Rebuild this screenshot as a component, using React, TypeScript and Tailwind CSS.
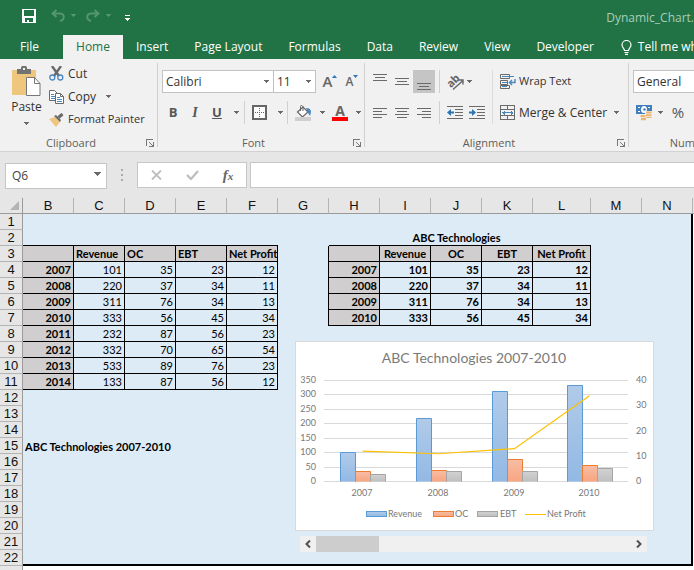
import type { ReactNode } from "react";

const UI = "font-['Open_Sans','Noto_Sans',sans-serif]";
const CALC = "font-['Lato','Open_Sans',sans-serif]";

function Caret() {
  return (
    <svg width="7" height="4" viewBox="0 0 7 4" className="text-[#6a6a6a]" shapeRendering="crispEdges" aria-hidden="true">
      <path d="M0 0h7v1H6v1H5v1H4v1H3V3H2V2H1V1H0z" fill="currentColor" />
    </svg>
  );
}

function SmallCaret({ className = "text-[#6a6a6a]" }: { className?: string }) {
  return (
    <svg width="5" height="3" viewBox="0 0 5 3" className={className} shapeRendering="crispEdges" aria-hidden="true">
      <path d="M0 0h5v1H4v1H3v1H2V2H1V1H0z" fill="currentColor" />
    </svg>
  );
}

function Launcher() {
  return (
    <button aria-label="More options" className="absolute right-1 bottom-1">
      <svg width="8" height="8" viewBox="0 0 8 8" shapeRendering="crispEdges">
        <path d="M.5 7V.5H7" fill="none" stroke="#777" />
        <path d="M3 3h1v1h1v1h1v1h1V3h1v5H3V7h3V6H5V5H4V4H3z" fill="#777" />
      </svg>
    </button>
  );
}

function Group({ label, className, launcher = true, children }: { label: string; className: string; launcher?: boolean; children: ReactNode }) {
  return (
    <section aria-label={label} className={`relative flex h-[92px] shrink-0 flex-col ${className}`}>
      <div className="h-[75px]">{children}</div>
      <div className={`text-center text-[11px] leading-[17px] text-[#605e5c] ${launcher ? "pr-4" : ""}`}>{label}</div>
      {launcher && <Launcher />}
      <span className="absolute top-1 right-0 h-[84px] w-px bg-[#d0d0d0]" />
    </section>
  );
}

function Divider() {
  return <span className="h-[23px] w-px shrink-0 bg-[#d0d0d0]" />;
}

function Tool({ label, className = "w-[22px]", children }: { label: string; className?: string; children: ReactNode }) {
  return (
    <button aria-label={label} className={`flex h-[23px] shrink-0 items-center justify-center ${className}`}>
      {children}
    </button>
  );
}

function Picker({ label, options, className }: { label: string; options: string[]; className: string }) {
  return (
    <div className={`relative h-[23px] shrink-0 ${className}`}>
      <select aria-label={label} className="block h-full w-full appearance-none border border-[#c2c2c2] bg-white pl-[3px] text-[12px] leading-[20px] text-[#333] outline-none">
        {options.map((o) => (
          <option key={o}>{o}</option>
        ))}
      </select>
      <span className="pointer-events-none absolute top-[10px] right-[5px]">
        <SmallCaret />
      </span>
    </div>
  );
}

function Lines({ rows }: { rows: [number, number, number][] }) {
  return (
    <svg width="14" height="16" viewBox="0 0 14 16" shapeRendering="crispEdges" aria-hidden="true">
      {rows.map(([y, a, b]) => (
        <path key={y} d={`M${a} ${y + 0.5}H${b}`} stroke="#6a6a6a" />
      ))}
    </svg>
  );
}

function Indent({ dir }: { dir: "in" | "out" }) {
  return (
    <svg width="16" height="13" viewBox="0 0 16 13" aria-hidden="true">
      <g stroke="#6a6a6a" shapeRendering="crispEdges">
        <path d="M0 .5h16M8 3.500h8M8 6.500h8M8 9.500h8M0 12.500h16" />
      </g>
      {dir === "out" ? (
        <path d="M0 6.500L4 3v2.500h3v2H4V10z" fill="#2e75b6" />
      ) : (
        <path d="M7 6.500L3 3v2.500H0v2h3V10z" fill="#2e75b6" />
      )}
    </svg>
  );
}

function TitleBar() {
  return (
    <header className="flex h-[35px] items-center bg-[#217346] pl-[22px]">
      <button aria-label="Save" className="-mt-1">
        <svg width="14" height="14" viewBox="0 0 14 14" shapeRendering="crispEdges">
          <path d="M0 0h14v14H0zM2 1v6h10V1zM3 9v4h2v-2h2v2h4V9z" fill="#fff" fillRule="evenodd" />
        </svg>
      </button>
      <button aria-label="Undo" className="-mt-1 ml-[15px] flex items-center gap-[6px] text-[#549572]">
        <svg width="14" height="13" viewBox="0 0 14 13">
          <path d="M5.500 1L1.500 4.500 5.500 8M2 4.500h7c5 .5 5 6.500 0 7.500" fill="none" stroke="currentColor" strokeWidth="2" />
        </svg>
        <SmallCaret className="text-[#549572]" />
      </button>
      <button aria-label="Redo" className="-mt-1 ml-[10px] flex items-center gap-[6px] text-[#549572]">
        <svg width="14" height="13" viewBox="0 0 14 13">
          <path d="M8.500 1l4 3.500L8.500 8M12 4.500H5C0 5 0 11 5 12" fill="none" stroke="currentColor" strokeWidth="2" />
        </svg>
        <SmallCaret className="text-[#549572]" />
      </button>
      <button aria-label="Customize toolbar" className="ml-[14px]">
        <svg width="5" height="6" viewBox="0 0 5 6" shapeRendering="crispEdges">
          <path d="M0 0h5v1H0zM0 3h5v1H4v1H3v1H2V5H1V4H0z" fill="#fff" />
        </svg>
      </button>
      <h1 className="ml-auto text-[12px] whitespace-nowrap text-[#a9cdb8]">Dynamic_Chart.</h1>
    </header>
  );
}

const TABS = ["Insert", "Page Layout", "Formulas", "Data", "Review", "View", "Developer"];

function Tabs() {
  return (
    <nav className="flex h-6 items-stretch overflow-hidden bg-[#217346] text-[12px] whitespace-nowrap text-white">
      <button className="w-[63px] shrink-0 pr-1">File</button>
      <button className="w-[60px] shrink-0 bg-[#f1f1f1] text-[#217346]">Home</button>
      {TABS.map((t) => (
        <button key={t} className="shrink-0 px-[13px]">
          {t}
        </button>
      ))}
      <button className="flex shrink-0 items-center gap-[6px] pl-[14px]">
        <svg width="11" height="15" viewBox="0 0 11 15" aria-hidden="true">
          <path d="M3.500 10.500c0-2-2.500-3-2.500-5.500a4.500 4.500 0 019 0c0 2.500-2.500 3.500-2.500 5.500zM3.500 12.500h4M4 14.300h3" fill="none" stroke="#fff" strokeWidth="1.200" />
        </svg>
        Tell me what you want to do
      </button>
    </nav>
  );
}

function Clipboard() {
  return (
    <Group label="Clipboard" className="w-[158px]">
      <div className="flex pt-[3px] text-[11px] text-[#333]">
        <button className="flex w-[49px] flex-col items-center pt-1 pl-1">
          <svg width="29" height="31" viewBox="0 0 29 31" aria-hidden="true">
            <rect x="0" y="4" width="24" height="25" rx="1" fill="#eec67d" />
            <path d="M5 8V3h4V1.500Q9 0 10.500 0h3Q15 0 15 1.500V3h4v5z" fill="#737373" />
            <rect x="11" y="2" width="2" height="2" fill="#f1f1f1" />
            <path d="M14.500 11.500h8l5.500 6v12H14.500z" fill="#fff" stroke="#777" />
            <path d="M22.500 11.500v6H28" fill="none" stroke="#777" />
          </svg>
          <span className="text-[12px] leading-[20px]">Paste</span>
          <span className="pt-[5px]">
            <SmallCaret />
          </span>
        </button>
        <div className="flex flex-col items-start whitespace-nowrap">
          <button className="flex h-[23px] items-center gap-1 text-[12px]">
            <svg width="15" height="15" viewBox="0 0 15 15" aria-hidden="true">
              <path d="M3 0l7 10M12 0L5 10" stroke="#6a6a6a" strokeWidth="2.400" fill="none" />
              <circle cx="3.300" cy="11.500" r="2.500" fill="none" stroke="#4a86c0" strokeWidth="1.300" />
              <circle cx="11.300" cy="11.500" r="2.500" fill="none" stroke="#4a86c0" strokeWidth="1.300" />
            </svg>
            Cut
          </button>
          <button className="flex h-[23px] items-center gap-1 text-[12px]">
            <svg width="15" height="14" viewBox="0 0 15 14" aria-hidden="true">
              <path d="M.5.5h5l3 3v7h-8z" fill="#fff" stroke="#6a6a6a" />
              <path d="M2 4.500h3M2 6.500h4M2 8.500h4" stroke="#4a86c0" />
              <path d="M6.500 3.500h5l3 3v7h-8z" fill="#fff" stroke="#6a6a6a" />
              <path d="M11.500 3.500v3h3" fill="none" stroke="#6a6a6a" />
              <path d="M8 7.500h3M8 9.500h5M8 11.500h5" stroke="#4a86c0" />
            </svg>
            Copy
            <span className="pl-[6px]">
              <SmallCaret />
            </span>
          </button>
          <button className="flex h-[23px] items-center gap-1">
            <svg width="15" height="14" viewBox="0 0 15 14" aria-hidden="true">
              <path d="M0 6l6-2 5 5-4 5z" fill="#eec67d" />
              <path d="M5 3l2-1 5 5-1 2z" fill="#6a6a6a" />
              <path d="M9.500 4.500L13.500 1" stroke="#6a6a6a" strokeWidth="3" />
            </svg>
            Format Painter
          </button>
        </div>
      </div>
    </Group>
  );
}

function FontGroup() {
  return (
    <Group label="Font" className="w-[207px]">
      <div className="flex flex-col gap-2 pt-[11px] pl-1">
        <div className="flex">
          <Picker label="Font name" options={["Calibri", "Arial"]} className="w-[112px]" />
          <Picker label="Font size" options={["11", "12"]} className="-ml-px w-[43px]" />
          <Tool label="Increase font size" className="ml-[3px] w-[22px]">
            <span className="text-[15px] leading-[23px] font-semibold text-[#666]">A</span>
            <svg width="5" height="3" viewBox="0 0 5 3" className="-mt-[11px]">
              <path d="M0 3L2.500 0 5 3z" fill="#2e75b6" />
            </svg>
          </Tool>
          <Tool label="Decrease font size">
            <span className="text-[12px] leading-[23px] font-semibold text-[#666]">A</span>
            <svg width="5" height="3" viewBox="0 0 5 3" className="-mt-[11px]">
              <path d="M0 0h5L2.500 3z" fill="#2e75b6" />
            </svg>
          </Tool>
        </div>
        <div className="flex items-center text-[13px] text-[#555]">
          <Tool label="Bold">
            <b>B</b>
          </Tool>
          <Tool label="Italic">
            <i className="font-['Liberation_Serif',serif] text-[14px] font-bold">I</i>
          </Tool>
          <Tool label="Underline">
            <u className="font-bold">U</u>
          </Tool>
          <Tool label="Underline style" className="w-[16px]">
            <SmallCaret />
          </Tool>
          <Divider />
          <Tool label="Borders" className="w-[28px]">
            <svg width="15" height="15" viewBox="0 0 15 15" shapeRendering="crispEdges">
              <path d="M1 1h13v13H1z" fill="#fff" stroke="#666" strokeWidth="2" />
              <path d="M7.500 3v10M3 7.500h10" stroke="#666" strokeDasharray="1 1" />
            </svg>
          </Tool>
          <Tool label="Border style" className="w-[14px]">
            <SmallCaret />
          </Tool>
          <Divider />
          <Tool label="Fill color" className="w-[30px]">
            <svg width="17" height="16" viewBox="0 0 17 16">
              <path d="M2.500 7L8 2l5 5-5.500 5z" fill="#fff" stroke="#666" strokeWidth="1.200" />
              <path d="M5.500 6V1.500Q5.500.5 6.500.5t1.500 1V6" fill="none" stroke="#666" />
              <path d="M11 3q5 0 5 4l-1 4-2.500-4z" fill="#4a86c0" />
              <path d="M0 12h16v4H0z" fill="#d0cece" />
            </svg>
          </Tool>
          <Tool label="Fill palette" className="w-2">
            <SmallCaret />
          </Tool>
          <Tool label="Font color" className="w-[28px] flex-col">
            <span className="text-[14px] leading-[11px] font-bold text-[#666]">A</span>
            <span className="mt-px h-1 w-4 bg-[#f00]" />
          </Tool>
          <Tool label="Font palette" className="w-2">
            <SmallCaret />
          </Tool>
        </div>
      </div>
    </Group>
  );
}

function AlignmentGroup() {
  return (
    <Group label="Alignment" className="w-[264px]">
      <div className="flex pt-[11px] pl-1">
        <div className="flex flex-col gap-2">
          <div className="flex">
            <Tool label="Top align"><Lines rows={[[0, 0, 14], [3, 2, 12], [6, 0, 14]]} /></Tool>
            <Tool label="Middle align"><Lines rows={[[4, 0, 14], [7, 2, 12], [10, 0, 14]]} /></Tool>
            <Tool label="Bottom align" className="w-[22px] bg-[#c5c5c5]"><Lines rows={[[9, 0, 14], [12, 2, 12], [15, 0, 14]]} /></Tool>
          </div>
          <div className="flex">
            <Tool label="Align left"><Lines rows={[[3, 0, 14], [6, 0, 9], [9, 0, 14], [12, 0, 9]]} /></Tool>
            <Tool label="Center"><Lines rows={[[3, 0, 14], [6, 2, 12], [9, 0, 14], [12, 2, 12]]} /></Tool>
            <Tool label="Align right"><Lines rows={[[3, 0, 14], [6, 5, 14], [9, 0, 14], [12, 5, 14]]} /></Tool>
          </div>
        </div>
        <div className="ml-1 flex flex-col gap-2">
          <div className="flex">
            <Divider />
            <Tool label="Orientation" className="ml-[6px] w-[20px]">
              <svg width="18" height="16" viewBox="0 0 18 16">
                <text x="0" y="11" transform="rotate(-45 6 8)" fontSize="11" fontWeight="700" fill="#666">ab</text>
                <path d="M6 15.500l9.500-8.500M11.500 6h4.500v4.500" fill="none" stroke="#666" strokeWidth="1.400" />
              </svg>
            </Tool>
            <Tool label="Orientation menu" className="w-[7px]">
              <SmallCaret />
            </Tool>
          </div>
          <div className="flex">
            <Divider />
            <Tool label="Decrease indent" className="ml-1 w-[22px]"><Indent dir="out" /></Tool>
            <Tool label="Increase indent"><Indent dir="in" /></Tool>
          </div>
        </div>
        <span className="ml-1 h-[54px] w-px shrink-0 bg-[#dcdcdc]" />
        <div className="ml-[7px] flex flex-col items-start gap-2 text-[11px] whitespace-nowrap text-[#333]">
          <button className="flex h-[23px] items-center gap-[3px]">
            <svg width="16" height="16" viewBox="0 0 16 16" aria-hidden="true">
              <path d="M.5.500h9v4h-9zM.5 6.500h7v4h-7zM.5 11.500h9v3h-9z" fill="none" stroke="#6a6a6a" />
              <path d="M2 2.500h12M2 8.500h5M2 12.500h5" stroke="#4a86c0" />
              <path d="M15 5v3.500h-5M12 6L9.500 8.500 12 11" fill="none" stroke="#4a86c0" strokeWidth="1.400" />
            </svg>
            Wrap Text
          </button>
          <button className="flex h-[23px] items-center gap-[3px] text-[12px]">
            <svg width="16" height="16" viewBox="0 0 16 16" shapeRendering="crispEdges" aria-hidden="true">
              <path d="M.5.500h14v14H.5zM.5 4.500h14M.5 10.500h14M7.500.500v4M7.500 10.500v4" fill="none" stroke="#6a6a6a" />
              <path d="M2 7.500h11M4 5.500v4M3 6.500v2M11 5.500v4M12 6.500v2" stroke="#4a86c0" />
            </svg>
            Merge &amp; Center
            <span className="pl-1">
              <SmallCaret />
            </span>
          </button>
        </div>
      </div>
    </Group>
  );
}

function NumberGroup() {
  return (
    <Group label="Number" className="w-[124px]" launcher={false}>
      <div className="flex flex-col gap-2 pt-[11px] pl-1">
        <Picker label="Number format" options={["General", "Number"]} className="w-[112px]" />
        <div className="flex items-center">
          <Tool label="Accounting format">
            <svg width="17" height="16" viewBox="0 0 17 16">
              <path d="M0 0h16v9H0z" fill="#3f7fbd" />
              <path d="M2 2h2v1H2zM12 2h2v1h-2zM2 6h2v1H2z" fill="#fff" />
              <ellipse cx="8" cy="4.500" rx="3" ry="3.500" fill="#fff" />
              <circle cx="8.500" cy="4.500" r="1.300" fill="#3f7fbd" />
              <path d="M9 6h7v8H9z" fill="#f1f1f1" />
              <path d="M10 6.500h5.500v2H10zM10 9.200h5.500v1.800H10zM10 11.700h5.500v1.300H10zM4.500 10h5v2h-5zM5 12.800h5v2.500H5z" fill="#eab676" />
            </svg>
          </Tool>
          <Tool label="Accounting menu" className="w-[10px]">
            <SmallCaret />
          </Tool>
          <Tool label="Percent style" className="w-[26px]">
            <span className="text-[15px] text-[#555]">%</span>
          </Tool>
        </div>
      </div>
    </Group>
  );
}

function FormulaBar() {
  return (
    <div className="flex bg-[#e6e6e6] py-[10px] pl-[5px]">
      <div className="relative h-[26px] w-[102px]">
        <input aria-label="Name box" defaultValue="Q6" className="h-full w-full border border-[#c6c6c6] bg-white pl-[6px] text-[12px] text-[#444] outline-none" />
        <span className="absolute top-[10px] right-[6px]">
          <Caret />
        </span>
      </div>
      <span className="flex w-[30px] flex-col items-center justify-center gap-[3px]">
        <i className="h-[2px] w-[2px] bg-[#aaa]" />
        <i className="h-[2px] w-[2px] bg-[#aaa]" />
        <i className="h-[2px] w-[2px] bg-[#aaa]" />
      </span>
      <div className="flex h-[26px] w-[110px] items-center border border-[#c6c6c6] bg-white">
        <button aria-label="Cancel" className="flex w-9 justify-center">
          <svg width="11" height="10" viewBox="0 0 11 10">
            <path d="M1 .5l9 9M10 .5l-9 9" stroke="#bdbdbd" strokeWidth="1.800" />
          </svg>
        </button>
        <button aria-label="Enter" className="flex w-9 justify-center">
          <svg width="13" height="10" viewBox="0 0 13 10">
            <path d="M1 5l4 4 7-8" fill="none" stroke="#bdbdbd" strokeWidth="2.200" />
          </svg>
        </button>
        <button aria-label="Insert function" className="w-9 font-['Liberation_Serif',serif] text-[15px] leading-[20px] font-bold text-[#666] italic">
          f<span className="text-[11px]">x</span>
        </button>
      </div>
      <input aria-label="Formula" className="ml-[3px] h-[26px] min-w-0 flex-1 border border-r-0 border-[#c6c6c6] bg-white px-2 text-[12px] outline-none" />
    </div>
  );
}

const COLUMNS = ["B", "C", "D", "E", "F", "G", "H", "I", "J", "K", "L", "M", "N"];

const LEFT_TABLE: Record<number, (string | number)[]> = {
  3: ["", "Revenue", "OC", "EBT", "Net Profit"],
  4: [2007, 101, 35, 23, 12],
  5: [2008, 220, 37, 34, 11],
  6: [2009, 311, 76, 34, 13],
  7: [2010, 333, 56, 45, 34],
  8: [2011, 232, 87, 56, 23],
  9: [2012, 332, 70, 65, 54],
  10: [2013, 533, 89, 76, 23],
  11: [2014, 133, 87, 56, 12],
};

const HEAD_CELL = "border-r border-b border-black bg-[#d0cece] font-bold whitespace-nowrap";

function LeftCells({ row }: { row: number }) {
  const cells = LEFT_TABLE[row];
  if (!cells) return <td colSpan={5} className={row === 2 ? "border-b border-black" : ""} />;
  return cells.map((v, i) => (
    <td
      key={i}
      className={
        row === 3
          ? `${HEAD_CELL} pl-[2px] text-left`
          : i === 0
            ? `${HEAD_CELL} pr-[2px] text-right`
            : "border-r border-b border-black pr-[2px] text-right"
      }
    >
      {v}
    </td>
  ));
}

function RightCells({ row }: { row: number }) {
  if (row === 2) {
    return (
      <>
        <td className="border-b border-black" />
        <td colSpan={3} className="border-b border-black text-center font-bold whitespace-nowrap">ABC Technologies</td>
        <td className="border-b border-black" />
      </>
    );
  }
  if (row < 3 || row > 7) return <td colSpan={5} />;
  return LEFT_TABLE[row].map((v, i) => (
    <td
      key={i}
      className={
        row === 3
          ? `${HEAD_CELL} text-center`
          : i === 0
            ? `${HEAD_CELL} pr-[2px] text-right`
            : "border-r border-b border-black pr-[2px] text-right font-bold"
      }
    >
      {v}
    </td>
  ));
}

const HEADER_TEXT = "font-['Liberation_Sans',sans-serif] text-[13px] leading-[15px] font-normal text-[#111]";

function Grid() {
  const rows = Array.from({ length: 22 }, (_, i) => i + 1);
  return (
    <table className={`w-full table-fixed border-separate border-spacing-0 bg-[#ddebf7] text-[11px] leading-[15px] text-black ${CALC}`}>
      <colgroup>
        <col className="w-[23px]" />
        {COLUMNS.map((c) => (
          <col key={c} className={c === "L" ? "w-[58px]" : "w-[51px]"} />
        ))}
        <col />
      </colgroup>
      <thead>
        <tr className="h-4 bg-[#e6e6e6]">
          <td className="border-r border-b border-[#9b9b9b] p-0">
            <svg width="9" height="9" viewBox="0 0 9 9" className="ml-[10px]" aria-hidden="true">
              <path d="M9 0v9H0z" fill="#b4b4b4" />
            </svg>
          </td>
          {COLUMNS.map((c) => (
            <th key={c} scope="col" className={`h-4 border-r border-b border-r-[#b4b4b4] border-b-[#9b9b9b] p-0 text-center ${HEADER_TEXT}`}>
              {c}
            </th>
          ))}
          <td className="border-b border-[#9b9b9b]" />
        </tr>
      </thead>
      <tbody>
        {rows.map((r) => {
          const left = r === 15 ? (
            <td colSpan={5} className="pl-[2px] font-bold whitespace-nowrap">ABC Technologies 2007-2010</td>
          ) : (
            <LeftCells row={r} />
          );
          return (
            <tr key={r} className="h-4">
              <th scope="row" className={`h-4 border-r border-b border-r-[#9b9b9b] border-b-[#b4b4b4] bg-[#e6e6e6] p-0 text-center ${HEADER_TEXT}`}>
                {r}
              </th>
              {r === 22 ? (
                <>
                  <td colSpan={12} className="border-b-2 border-black" />
                  <td className="border-r-2 border-b-2 border-black" />
                </>
              ) : (
                <>
                  {left}
                  <td className={r >= 3 && r <= 7 ? "border-r border-black" : ""} />
                  <RightCells row={r} />
                  <td />
                  <td className="border-r-2 border-black" />
                </>
              )}
              <td className="bg-white" />
            </tr>
          );
        })}
        <tr className="h-4">
          <th className="h-4 border-r border-[#9b9b9b] bg-[#e6e6e6] p-0" />
          <td colSpan={14} className="bg-white" />
        </tr>
      </tbody>
    </table>
  );
}

const YEARS = [
  { year: 2007, x: 45, mid: 67, revenue: 101, oc: 35, ebt: 23, profit: 12 },
  { year: 2008, x: 121, mid: 143, revenue: 220, oc: 37, ebt: 34, profit: 11 },
  { year: 2009, x: 197, mid: 219, revenue: 311, oc: 76, ebt: 34, profit: 13 },
  { year: 2010, x: 272, mid: 294, revenue: 333, oc: 56, ebt: 45, profit: 34 },
];

const BASE = 140;
const PLOT = 101;
const STYLES = [
  { fill: "url(#blue)", stroke: "#5b9bd5" },
  { fill: "url(#orange)", stroke: "#ed7d31" },
  { fill: "url(#gray)", stroke: "#a5a5a5" },
];

function Chart() {
  return (
    <svg width="359" height="190" viewBox="0 0 359 190" role="img" aria-label="ABC Technologies 2007-2010" className={`block ${CALC}`}>
      <defs>
        <linearGradient id="blue" x2="0" y2="1"><stop stopColor="#b1cbe9" /><stop offset="1" stopColor="#92b9e4" /></linearGradient>
        <linearGradient id="orange" x2="0" y2="1"><stop stopColor="#f7bda4" /><stop offset="1" stopColor="#f8a581" /></linearGradient>
        <linearGradient id="gray" x2="0" y2="1"><stop stopColor="#d2d2d2" /><stop offset="1" stopColor="#bfbfbf" /></linearGradient>
      </defs>
      <rect x=".5" y=".5" width="358" height="189" fill="#fff" stroke="#d9d9d9" />
      <text x="179" y="22" textAnchor="middle" fontSize="14" fill="#7a7a7a">ABC Technologies 2007-2010</text>
      {[0, 50, 100, 150, 200, 250, 300, 350].map((v) => {
        const y = Math.round(BASE - (v * PLOT) / 350);
        return (
          <g key={v}>
            <path d={`M29 ${y + 0.5}H333`} stroke="#d9d9d9" />
            <text x="21" y={y + 3} textAnchor="end" fontSize="9" fill="#777">{v}</text>
          </g>
        );
      })}
      {[0, 10, 20, 30, 40].map((v) => (
        <text key={v} x="341" y={Math.round(BASE - (v * PLOT) / 40) + 3} fontSize="9" fill="#777">{v}</text>
      ))}
      {YEARS.map((d) => (
        <g key={d.year}>
          {[d.revenue, d.oc, d.ebt].map((v, i) => {
            const y = Math.round(BASE - (v * PLOT) / 350) + 0.5;
            const x = d.x + i * 15 + 0.5;
            return (
              <g key={i}>
                <rect x={x} y={y} width="15" height={BASE - y + 0.5} fill={STYLES[i].fill} />
                <path d={`M${x} ${BASE + 0.5}V${y}h15V${BASE + 0.5}`} fill="none" stroke={STYLES[i].stroke} />
              </g>
            );
          })}
          <text x={d.mid} y="155" textAnchor="middle" fontSize="9" fill="#777">{d.year}</text>
        </g>
      ))}
      <polyline
        points={YEARS.map((d) => `${d.mid + 0.5},${BASE + 0.5 - (d.profit * PLOT) / 40}`).join(" ")}
        fill="none"
        stroke="#ffc000"
        strokeWidth="1.200"
      />
      <rect x="71.500" y="170.500" width="20" height="5" fill="url(#blue)" stroke="#5b9bd5" />
      <rect x="138.500" y="170.500" width="20" height="5" fill="url(#orange)" stroke="#ed7d31" />
      <rect x="182.500" y="170.500" width="20" height="5" fill="url(#gray)" stroke="#a5a5a5" />
      <path d="M230 173.500h21" stroke="#ffc000" />
      <g fontSize="9" fill="#777">
        <text x="93" y="176">Revenue</text>
        <text x="160" y="176">OC</text>
        <text x="205" y="176">EBT</text>
        <text x="252" y="176">Net Profit</text>
      </g>
    </svg>
  );
}

function ScrollBar() {
  return (
    <div className="ml-[5px] flex h-4 w-[347px] bg-[#f0f0f0]">
      <button aria-label="Scroll left" className="flex w-4 items-center justify-center">
        <svg width="6" height="8" viewBox="0 0 6 8"><path d="M5 .5L1.500 4 5 7.500" fill="none" stroke="#505050" strokeWidth="2" /></svg>
      </button>
      <span className="w-[63px] bg-[#cdcdcd]" />
      <button aria-label="Scroll right" className="ml-auto flex w-4 items-center justify-center">
        <svg width="6" height="8" viewBox="0 0 6 8"><path d="M1 .5L4.500 4 1 7.500" fill="none" stroke="#505050" strokeWidth="2" /></svg>
      </button>
    </div>
  );
}

export default function App() {
  return (
    <div className={`flex h-screen flex-col overflow-hidden bg-white ${UI}`}>
      <TitleBar />
      <Tabs />
      <div className="flex shrink-0 overflow-hidden border-b border-[#d2d2d2] bg-[#f1f1f1]">
        <Clipboard />
        <FontGroup />
        <AlignmentGroup />
        <NumberGroup />
      </div>
      <FormulaBar />
      <main className="relative min-h-0 flex-1 overflow-hidden">
        <Grid />
        <div className="absolute top-[143px] left-[295px] flex flex-col gap-[5px]">
          <Chart />
          <ScrollBar />
        </div>
      </main>
    </div>
  );
}
